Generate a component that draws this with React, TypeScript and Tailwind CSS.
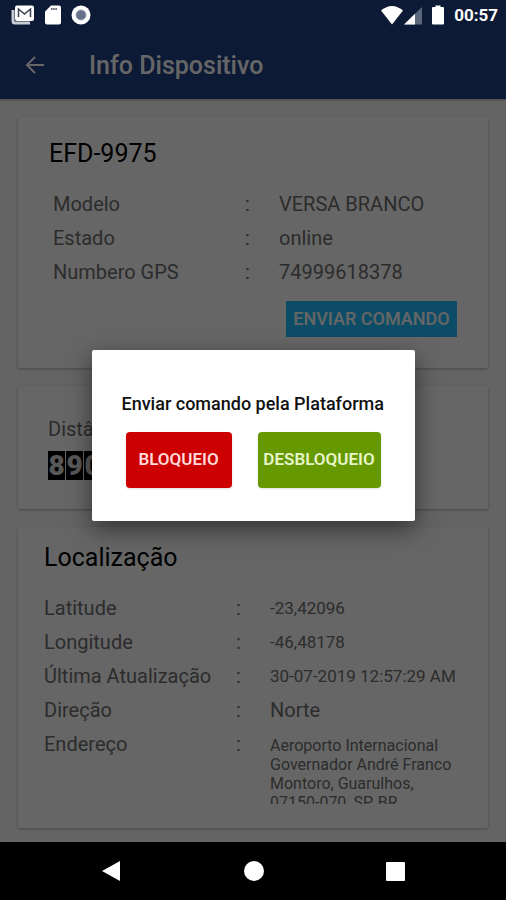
import { useState } from "react";

const deviceRows = [
  { label: "Modelo", value: "VERSA BRANCO" },
  { label: "Estado", value: "online" },
  { label: "Numbero GPS", value: "74999618378" },
];

const locationRows = [
  { label: "Latitude", value: "-23,42096", size: "text-[17px]" },
  { label: "Longitude", value: "-46,48178", size: "text-[17px]" },
  { label: "Última Atualização", value: "30-07-2019 12:57:29 AM", size: "text-[17px]" },
  { label: "Direção", value: "Norte", size: "text-[20px]" },
];

function StatusBar() {
  return (
    <div className="relative z-20 flex h-[30px] items-center justify-between pr-2 pl-[11px] text-white">
      <div className="flex items-center gap-[10px]">
        <svg className="h-5 w-6" viewBox="0 0 24 20" aria-label="Gmail">
          <path d="M2 5v11q0 2 2 2h15" fill="none" stroke="#c9ccd3" strokeWidth="3" />
          <rect x="4" y="0.5" width="19" height="15.5" rx="2" fill="#fff" />
          <path d="M7.5 12V4l6 5 6-5v8" fill="none" stroke="#3a4250" strokeWidth="1.5" />
        </svg>
        <svg className="h-5 w-4" viewBox="0 0 16 20" aria-label="SD">
          <path d="M6 0.5h8q2 0 2 2v15q0 2-2 2H2q-2 0-2-2V6.5z" fill="#fff" />
          <path d="M6 4h6" stroke="#5a6270" strokeWidth="2" strokeDasharray="1.5 0.7" />
        </svg>
        <svg className="h-5 w-5" viewBox="0 0 20 20" aria-label="Sync">
          <circle cx="10" cy="10" r="9.5" fill="#fff" />
          <circle cx="10" cy="10" r="5" fill="#66728a" stroke="#9aa2b1" />
        </svg>
      </div>
      <div className="flex items-center">
        <svg className="h-5 w-6" viewBox="0 0 24 20" aria-label="Wi-Fi">
          <path d="M1 5.5Q12-3.5 23 5.5L12 19.5z" fill="#fff" />
        </svg>
        <svg className="h-5 w-[18px]" viewBox="0 0 18 20" aria-label="Sinal">
          <path d="M18 2v17.5H0z" fill="#5b667b" />
          <path d="M11 8.8v10.7H0z" fill="#fff" />
        </svg>
        <svg className="ml-[10px] h-5 w-3" viewBox="0 0 12 20" aria-label="Bateria">
          <path d="M3.5 0.5h5V2H11q1 0 1 1v15.5q0 1-1 1H1q-1 0-1-1V3q0-1 1-1h2.5z" fill="#fff" />
        </svg>
        <span className="mt-0.5 ml-[10px] text-[17px] font-bold">00:57</span>
      </div>
    </div>
  );
}

function Card({ className, children }: { className: string; children: React.ReactNode }) {
  return (
    <section className={`rounded-xs bg-white shadow-[0_1px_3px_rgba(0,0,0,0.3)] ${className}`}>
      {children}
    </section>
  );
}

function Dialog({ onClose }: { onClose: () => void }) {
  return (
    <div className="absolute inset-0 z-10 flex items-center justify-center bg-black/60 pt-7 pb-[58px]">
      <div
        role="dialog"
        aria-labelledby="dialog-title"
        className="w-[323px] rounded-xs bg-white px-[30px] pt-[42px] pb-[33px] shadow-[0_8px_24px_rgba(0,0,0,0.5)]"
      >
        <h2 id="dialog-title" className="text-lg leading-6 font-medium whitespace-nowrap text-[#111]">
          Enviar comando pela Plataforma
        </h2>
        <div className="mt-4 flex justify-between px-1">
          <button
            onClick={onClose}
            className="h-14 w-[106px] rounded-sm bg-[#cc0000] text-[17px] font-semibold text-[#ffd9d9] shadow"
          >
            BLOQUEIO
          </button>
          <button
            onClick={onClose}
            className="h-14 w-[123px] rounded-sm bg-[#669900] text-[17px] font-semibold text-[#e6f5cc] shadow"
          >
            DESBLOQUEIO
          </button>
        </div>
      </div>
    </div>
  );
}

function NavBar() {
  return (
    <nav className="relative z-20 flex h-[58px] items-center justify-between bg-black px-[101px]">
      <button aria-label="Voltar">
        <svg className="h-5 w-5" viewBox="0 0 20 20">
          <path d="M19 0v20L1 10z" fill="#fff" />
        </svg>
      </button>
      <button aria-label="Início" className="size-5 rounded-full bg-white" />
      <button aria-label="Recentes" className="size-[19px] rounded-[1px] bg-white" />
    </nav>
  );
}

export default function App() {
  const [open, setOpen] = useState(true);

  return (
    <div className="relative flex min-h-screen flex-col bg-[#fafafa] font-[Roboto,sans-serif] text-[#6f6f6f]">
      <header className="bg-[#1e4186] shadow-[0_1px_2px_rgba(0,0,0,0.3)]">
        <StatusBar />
        <div className="flex h-[69px] items-center pl-6 text-white">
          <button aria-label="Voltar" onClick={() => setOpen(false)}>
            <svg className="size-[22px]" viewBox="0 0 22 22" fill="none" stroke="currentColor" strokeWidth="2">
              <path d="M20 11H3M11 3l-8 8 8 8" />
            </svg>
          </button>
          <h1 className="mt-0.5 ml-[43px] text-[25px] font-medium">Info Dispositivo</h1>
        </div>
      </header>

      <main className="flex flex-1 flex-col gap-[18px] px-[18px] pt-[18px] pb-[14px]">
        <Card className="px-[31px] pt-[21px] pb-[31px]">
          <h2 className="text-[25px] leading-8 text-black">EFD-9975</h2>
          <dl className="mt-[17px] grid grid-cols-[192px_34px_1fr] pl-1 text-xl leading-[34px]">
            {deviceRows.map((row) => (
              <div key={row.label} className="col-span-3 grid grid-cols-subgrid">
                <dt>{row.label}</dt>
                <span>:</span>
                <dd>{row.value}</dd>
              </div>
            ))}
          </dl>
          <div className="mt-3 flex justify-end">
            <button
              onClick={() => setOpen(true)}
              className="h-9 w-[171px] bg-[#22bfff] text-lg font-medium text-white"
            >
              ENVIAR COMANDO
            </button>
          </div>
        </Card>

        <Card className="px-[30px] pt-[29px] pb-[29px]">
          <h2 className="text-xl leading-7">Distância</h2>
          <div className="mt-2 flex gap-px">
            {["8", "9", "0", "4", "2", "7"].map((digit, i) => (
              <span
                key={i}
                className="h-[29px] w-[17px] bg-black text-center text-[28px] leading-[29px] font-black text-[#dddddd]"
              >
                {digit}
              </span>
            ))}
          </div>
        </Card>

        <Card className="flex-1 px-[26px] pt-[15px] pb-[23px]">
          <h2 className="text-[25px] leading-8 text-black">Localização</h2>
          <dl className="mt-[17px] grid grid-cols-[192px_34px_1fr] text-xl leading-[34px]">
            {locationRows.map((row) => (
              <div key={row.label} className="col-span-3 grid grid-cols-subgrid">
                <dt>{row.label}</dt>
                <span>:</span>
                <dd className={row.size}>{row.value}</dd>
              </div>
            ))}
            <dt>Endereço</dt>
            <span>:</span>
            <dd className="mt-[9px] h-[68px] overflow-hidden text-base leading-[19px]">
              Aeroporto Internacional Governador André Franco Montoro, Guarulhos, 07150-070, SP, BR
            </dd>
          </dl>
        </Card>
      </main>

      {open && <Dialog onClose={() => setOpen(false)} />}
      <NavBar />
    </div>
  );
}
